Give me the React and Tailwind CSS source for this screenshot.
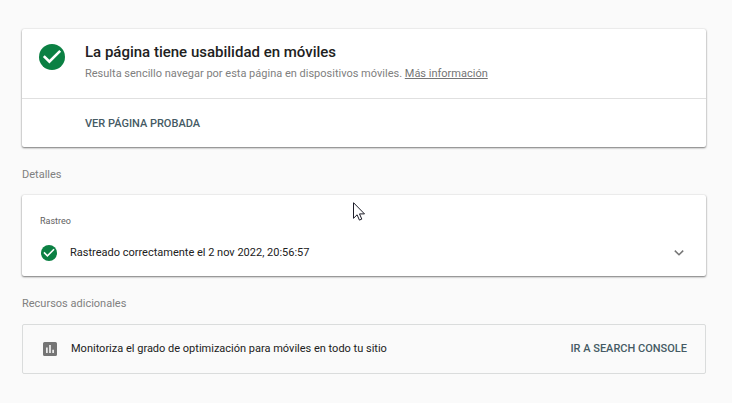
function CheckCircle({ className }) {
  return (
    <svg viewBox="2 2 20 20" className={className} aria-hidden="true">
      <circle cx="12" cy="12" r="10" fill="#0b8043" />
      <path d="M10 17l-5-5 1.41-1.41L10 14.17l7.59-7.59L19 8l-9 9z" fill="#fff" />
    </svg>
  )
}

function ChartIcon() {
  return (
    <svg viewBox="3 3 18 18" className="size-3.5 shrink-0" aria-hidden="true">
      <path
        d="M19 3H5a2 2 0 0 0-2 2v14a2 2 0 0 0 2 2h14a2 2 0 0 0 2-2V5a2 2 0 0 0-2-2zM9 17H7v-7h2v7zm4 0h-2V7h2v10zm4 0h-2v-4h2v4z"
        fill="#757575"
      />
    </svg>
  )
}

function Pointer() {
  return (
    <svg
      viewBox="0 0 12 19"
      className="pointer-events-none absolute left-[353px] top-[202px] h-[19px] w-3"
      aria-hidden="true"
    >
      <path
        d="M.5.7v15.6l3.6-3.5 2.3 5.3 2.4-1-2.3-5.2h5L.5.7z"
        fill="#fff"
        stroke="#1c1c28"
        strokeWidth="1"
      />
    </svg>
  )
}

function Card({ className = '', children }) {
  return (
    <section
      className={`rounded-xs bg-white shadow-[0_1px_2px_rgba(0,0,0,0.5),0_0_2px_rgba(0,0,0,0.12)] ${className}`}
    >
      {children}
    </section>
  )
}

function SectionTitle({ children }) {
  return <h2 className="pt-5 pb-3 text-[11px] leading-4 text-[#808080]">{children}</h2>
}

export default function App() {
  return (
    <main className="relative min-h-screen bg-[#fafafa] pt-[29px] pr-[26px] pb-7 pl-[22px] font-['Roboto',sans-serif] text-[11px] text-[#212121]">
      <Card>
        <div className="flex gap-5 border-b border-[#e0e0e0] px-[17px] pt-[11px] pb-4">
          <CheckCircle className="mt-1 size-[26px] shrink-0" />
          <div>
            <h1 className="text-[15px] leading-6 font-medium">La página tiene usabilidad en móviles</h1>
            <p className="mt-0.5 leading-4 text-[#808080]">
              Resulta sencillo navegar por esta página en dispositivos móviles.{' '}
              <a href="#info" className="text-[#757575] underline">Más información</a>
            </p>
          </div>
        </div>
        <div className="flex h-12 items-center pt-0.5 pl-[63px]">
          <button type="button" className="font-medium text-[#455a64] uppercase">
            Ver página probada
          </button>
        </div>
      </Card>

      <SectionTitle>Detalles</SectionTitle>
      <Card className="px-[18px] pt-[18px] pb-[15px]">
        <h3 className="text-[9px] leading-4 text-[#616161]">Rastreo</h3>
        <button type="button" className="mt-4 flex w-full items-center text-left">
          <CheckCircle className="mr-[13px] ml-px size-4 shrink-0" />
          <span className="flex-1 leading-4">Rastreado correctamente el 2 nov 2022, 20:56:57</span>
          <svg viewBox="0 0 10 6" className="mr-1 h-1.5 w-2.5" aria-hidden="true">
            <path d="M.8.6L5 4.8 9.2.6" fill="none" stroke="#757575" strokeWidth="1.5" />
          </svg>
        </button>
      </Card>

      <SectionTitle>Recursos adicionales</SectionTitle>
      <section className="flex h-[50px] items-center gap-3.5 rounded-xs border border-[#dadcdc] pr-[18px] pl-5">
        <ChartIcon />
        <p className="flex-1 leading-4">Monitoriza el grado de optimización para móviles en todo tu sitio</p>
        <button type="button" className="leading-4 font-medium text-[#455a64] uppercase">
          Ir a Search Console
        </button>
      </section>

      <Pointer />
    </main>
  )
}
